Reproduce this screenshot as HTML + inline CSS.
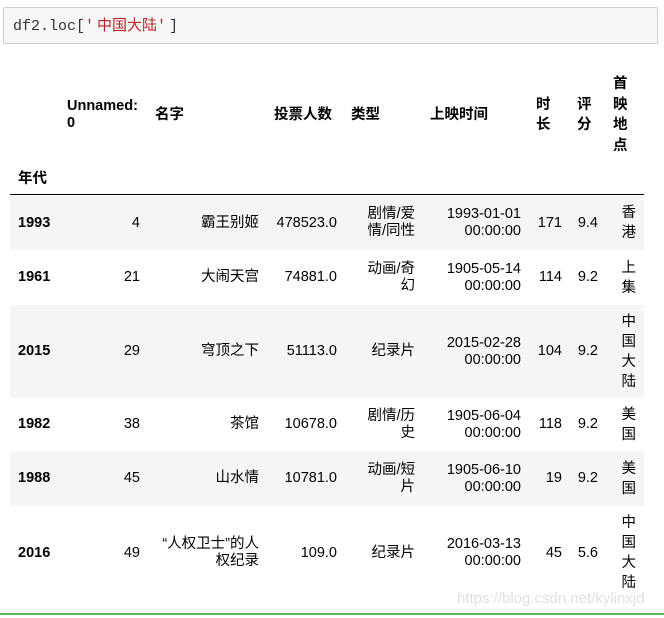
<!DOCTYPE html>
<html><head><meta charset="utf-8"><style>
body{margin:0;width:664px;height:618px;background:#fff;position:relative;overflow:hidden;font-family:"Liberation Sans","Noto Sans CJK SC",sans-serif;font-size:14.5px;color:#000}
.code{position:absolute;left:3px;top:7px;width:655px;height:37px;background:#f7f7f7;border:1px solid #cfcfcf;border-radius:2px;font-family:"Liberation Mono","Noto Sans CJK SC",monospace;font-size:15px;line-height:37px;padding-left:9px;box-sizing:border-box;color:#333}
.s{color:#ba2121}
.row{position:absolute;left:10px;width:634px}
.g{background:#f5f5f5}
.c{position:absolute;top:0;height:100%;display:flex;align-items:center;justify-content:flex-end;text-align:right;line-height:17px;box-sizing:border-box}
.b{font-weight:bold}
.v{line-height:20px;width:16px;word-break:break-all}
.h{font-weight:bold;align-items:center;justify-content:flex-start;text-align:left}
</style></head><body>
<div class="code">df2.loc[<span class="s">'&thinsp;中国大陆'&thinsp;</span>]</div>

<div class="row" style="top:70px;height:90px">
<div class="c h" style="left:57px;width:80px">Unnamed:<br>0</div>
<div class="c h" style="left:145px;width:60px">名字</div>
<div class="c h" style="left:264px;width:70px">投票人数</div>
<div class="c h" style="left:341px;width:50px">类型</div>
<div class="c h" style="left:420px;width:70px">上映时间</div>
<div class="c h" style="left:526px;width:20px;line-height:20px">时<br>长</div>
<div class="c h" style="left:567px;width:20px;line-height:20px">评<br>分</div>
<div class="c h" style="left:603px;width:20px;line-height:20.5px">首<br>映<br>地<br>点</div>
</div>
<div class="row" style="top:168px;height:22px"><div class="c h" style="left:8px;width:40px">年代</div></div>
<div style="position:absolute;left:10px;top:194px;width:634px;height:1px;background:#000"></div>

<div class="row g" style="top:196px;height:54px">
<div class="c b" style="left:8px;width:50px;justify-content:flex-start">1993</div>
<div class="c" style="left:60px;width:70px">4</div>
<div class="c" style="left:150px;width:99px">霸王别姬</div>
<div class="c" style="left:255px;width:72px">478523.0</div>
<div class="c" style="left:345px;width:60px">剧情/爱<br>情/同性</div>
<div class="c" style="left:420px;width:91px">1993-01-01<br>00:00:00</div>
<div class="c" style="left:520px;width:32px">171</div>
<div class="c" style="left:560px;width:28px">9.4</div>
<div class="c v" style="left:610px;height:100%">香<br>港</div>
</div>
<div class="row" style="top:250px;height:55px">
<div class="c b" style="left:8px;width:50px;justify-content:flex-start">1961</div>
<div class="c" style="left:60px;width:70px">21</div>
<div class="c" style="left:150px;width:99px">大闹天宫</div>
<div class="c" style="left:255px;width:72px">74881.0</div>
<div class="c" style="left:345px;width:60px">动画/奇<br>幻</div>
<div class="c" style="left:420px;width:91px">1905-05-14<br>00:00:00</div>
<div class="c" style="left:520px;width:32px">114</div>
<div class="c" style="left:560px;width:28px">9.2</div>
<div class="c v" style="left:610px;height:100%">上<br>集</div>
</div>
<div class="row g" style="top:305px;height:93px">
<div class="c b" style="left:8px;width:50px;justify-content:flex-start">2015</div>
<div class="c" style="left:60px;width:70px">29</div>
<div class="c" style="left:150px;width:99px">穹顶之下</div>
<div class="c" style="left:255px;width:72px">51113.0</div>
<div class="c" style="left:345px;width:60px">纪录片</div>
<div class="c" style="left:420px;width:91px">2015-02-28<br>00:00:00</div>
<div class="c" style="left:520px;width:32px">104</div>
<div class="c" style="left:560px;width:28px">9.2</div>
<div class="c v" style="left:610px;height:100%">中<br>国<br>大<br>陆</div>
</div>
<div class="row" style="top:398px;height:53px">
<div class="c b" style="left:8px;width:50px;justify-content:flex-start">1982</div>
<div class="c" style="left:60px;width:70px">38</div>
<div class="c" style="left:150px;width:99px">茶馆</div>
<div class="c" style="left:255px;width:72px">10678.0</div>
<div class="c" style="left:345px;width:60px">剧情/历<br>史</div>
<div class="c" style="left:420px;width:91px">1905-06-04<br>00:00:00</div>
<div class="c" style="left:520px;width:32px">118</div>
<div class="c" style="left:560px;width:28px">9.2</div>
<div class="c v" style="left:610px;height:100%">美<br>国</div>
</div>
<div class="row g" style="top:451px;height:55px">
<div class="c b" style="left:8px;width:50px;justify-content:flex-start">1988</div>
<div class="c" style="left:60px;width:70px">45</div>
<div class="c" style="left:150px;width:99px">山水情</div>
<div class="c" style="left:255px;width:72px">10781.0</div>
<div class="c" style="left:345px;width:60px">动画/短<br>片</div>
<div class="c" style="left:420px;width:91px">1905-06-10<br>00:00:00</div>
<div class="c" style="left:520px;width:32px">19</div>
<div class="c" style="left:560px;width:28px">9.2</div>
<div class="c v" style="left:610px;height:100%">美<br>国</div>
</div>
<div class="row" style="top:506px;height:94px">
<div class="c b" style="left:8px;width:50px;justify-content:flex-start">2016</div>
<div class="c" style="left:60px;width:70px">49</div>
<div class="c" style="left:140px;width:109px">“人权卫士”的人<br>权纪录</div>
<div class="c" style="left:255px;width:72px">109.0</div>
<div class="c" style="left:345px;width:60px">纪录片</div>
<div class="c" style="left:420px;width:91px">2016-03-13<br>00:00:00</div>
<div class="c" style="left:520px;width:32px">45</div>
<div class="c" style="left:560px;width:28px">5.6</div>
<div class="c v" style="left:610px;height:100%">中<br>国<br>大<br>陆</div>
</div>
<div style="position:absolute;left:457px;top:590px;font-size:15px;color:#e0e0e0">https://blog.csdn.net/kylinxjd</div>
<div style="position:absolute;left:0;top:613px;width:664px;height:2px;background:#5cb85c"></div>
</body></html>
